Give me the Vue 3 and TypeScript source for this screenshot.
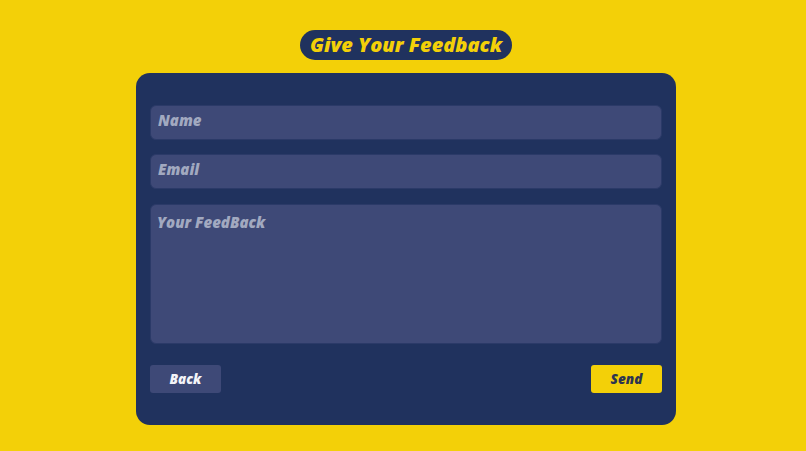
<script setup lang="ts">
const title: string = "Give Your Feedback";
</script>

<template>
  <main class="page">
    <h1 class="title">{{ title }}</h1>
    <form class="card" @submit.prevent>
      <input class="field" type="text" placeholder="Name" />
      <input class="field" type="email" placeholder="Email" />
      <textarea class="field area" placeholder="Your FeedBack"></textarea>
      <div class="actions">
        <button class="btn back" type="button">Back</button>
        <button class="btn send" type="submit">Send</button>
      </div>
    </form>
  </main>
</template>

<style>
html, body { margin: 0; background: #f3d008; }
</style>

<style scoped>
.page {
  width: 806px;
  height: 451px;
  box-sizing: border-box;
  padding: 30px 0 0 6px;
  background: #f3d008;
  display: flex;
  flex-direction: column;
  align-items: center;
  overflow: hidden;
  font-family: "Open Sans", Lato, sans-serif;
  font-style: italic;
  font-weight: 800;
}
.title {
  margin: 0 0 13px;
  width: 212px;
  height: 30px;
  border-radius: 15px;
  background: #20325e;
  color: #f3d008;
  font-size: 20px;
  font-weight: 800;
  line-height: 29px;
  text-align: center;
}
.card {
  width: 540px;
  height: 352px;
  box-sizing: border-box;
  padding: 32px 14px 0;
  border-radius: 14px;
  background: #20325e;
  display: flex;
  flex-direction: column;
}
.field {
  display: block;
  width: 512px;
  height: 35px;
  box-sizing: border-box;
  margin: 0 0 14px;
  padding: 0 7px 6px;
  border: 1px solid #2b3a68;
  border-radius: 6px;
  outline: none;
  background: #3e4977;
  color: #fff;
  font: inherit;
  font-size: 15px;
}
.field::placeholder {
  color: #a2a9c0;
  opacity: 1;
}
.area {
  height: 140px;
  margin: 1px 0 0;
  padding: 7px 6px;
  resize: none;
}
.actions {
  display: flex;
  justify-content: space-between;
  margin-top: 21px;
}
.btn {
  width: 71px;
  height: 28px;
  padding: 0;
  border: none;
  border-radius: 3px;
  font: inherit;
  font-size: 13.5px;
}
.back {
  background: #3e4977;
  color: #f4f4f8;
}
.send {
  background: #f3d008;
  color: #2c3450;
}
</style>
